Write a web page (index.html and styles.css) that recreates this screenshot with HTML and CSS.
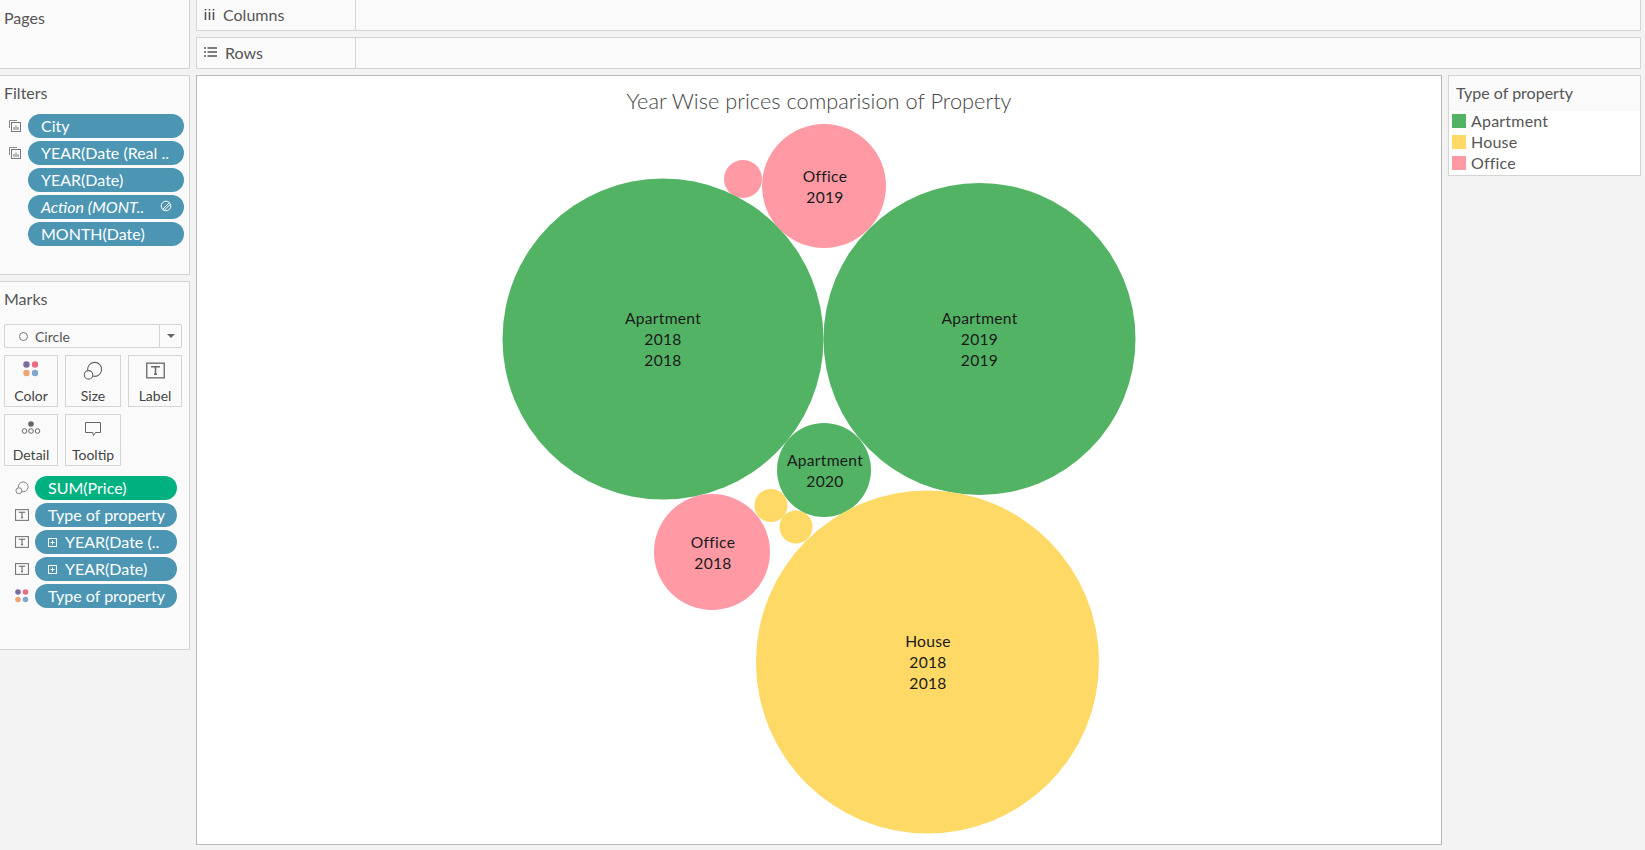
FILE: index.html
```html
<!doctype html>
<html lang="en">
<head>
    <meta charset="UTF-8">
    <title>Year Wise prices comparision of Property</title>
    <link rel="stylesheet" href="styles.css">
</head>
<body>
    <svg class="defs" width="0" height="0">
        <symbol id="i-stack" viewBox="0 0 12 12">
            <path d="M.5 8V.5H8M2.5 10V2.500H10" fill="none" stroke="#8a8a8a"/>
            <rect x="2.500" y="2.500" width="9" height="9" fill="#fafafa" stroke="#777"/>
            <path d="M5 10V7M7 10V5.500M9 10V7" stroke="#777"/>
        </symbol>
        <symbol id="i-text" viewBox="0 0 13 13">
            <rect x=".5" y="1.500" width="12" height="10" fill="none" stroke="#777"/>
            <path d="M4 4.500V4h5v.5M6.500 4v5M5.500 9h2" fill="none" stroke="#666"/>
        </symbol>
        <symbol id="i-size" viewBox="0 0 18 18">
            <path d="M4.330 8.780A6.300 6.300 0 1 1 8.650 13.520" fill="none" stroke="#666"/>
            <circle cx="5" cy="12.500" r="3.800" fill="none" stroke="#666"/>
        </symbol>
        <symbol id="i-dots" viewBox="0 0 14 14">
            <circle cx="3" cy="3" r="2.800" fill="#7b6c9c"/>
            <circle cx="10.500" cy="3" r="2.800" fill="#e96c80"/>
            <circle cx="3" cy="10.500" r="2.800" fill="#eda574"/>
            <circle cx="10.500" cy="10.500" r="2.800" fill="#7fa6cf"/>
        </symbol>
        <symbol id="i-plus" viewBox="0 0 9 9">
            <rect x=".5" y=".5" width="8" height="8" fill="none" stroke="#fff"/>
            <path d="M2.500 4.500h4M4.500 2.500v4" stroke="#fff"/>
        </symbol>
    </svg>

    <div class="top">
        <section class="card pages"><h2>Pages</h2></section>
        <div class="shelves">
            <div class="shelf">
                <div class="shelf-name">
                    <svg width="11" height="11" viewBox="0 0 11 11"><path d="M1.500 0v1.500M5.500 0v1.500M9.500 0v1.500M1.500 3v8M5.500 3v8M9.500 3v8" stroke="#555" stroke-width="1.600"/></svg>
                    Columns
                </div>
            </div>
            <div class="shelf">
                <div class="shelf-name">
                    <svg width="13" height="10" viewBox="0 0 13 10"><path d="M0 1h2M0 5h2M0 9h2M3.500 1H13M3.500 5H13M3.500 9H13" stroke="#555" stroke-width="1.500"/></svg>
                    Rows
                </div>
            </div>
        </div>
    </div>

    <div class="bottom">
        <div class="side">
            <section class="card filters">
                <h2>Filters</h2>
                <ul class="pills">
                    <li><svg class="pill-icon"><use href="#i-stack"/></svg><span class="pill">City</span></li>
                    <li><svg class="pill-icon"><use href="#i-stack"/></svg><span class="pill">YEAR(Date (Real ..</span></li>
                    <li><span class="pill">YEAR(Date)</span></li>
                    <li><span class="pill pill-action"><i>Action (MONT..</i>
                        <svg width="12" height="12" viewBox="0 0 12 12"><g fill="none" stroke="#fff"><circle cx="6" cy="6" r="4.800"/><path d="M2.600 9.400 9.400 2.600M4 10.500 10.500 4"/></g></svg>
                    </span></li>
                    <li><span class="pill">MONTH(Date)</span></li>
                </ul>
            </section>

            <section class="card marks">
                <h2>Marks</h2>
                <div class="mark-select">
                    <span class="mark-type"><span class="ring"></span>Circle</span>
                    <span class="caret"></span>
                </div>
                <div class="mark-buttons">
                    <div class="mark-btn">
                        <svg width="16" height="16"><use href="#i-dots"/></svg>
                        Color
                    </div>
                    <div class="mark-btn">
                        <svg width="20" height="20"><use href="#i-size"/></svg>
                        Size
                    </div>
                    <div class="mark-btn">
                        <svg width="19" height="19"><use href="#i-text"/></svg>
                        Label
                    </div>
                    <div class="mark-btn">
                        <svg width="20" height="16" viewBox="0 0 20 16"><g fill="none" stroke="#666"><circle cx="3.500" cy="11" r="2.300"/><circle cx="10" cy="11" r="2.300"/><circle cx="16.500" cy="11" r="2.300"/></g><circle cx="10" cy="4" r="2.800" fill="#666"/></svg>
                        Detail
                    </div>
                    <div class="mark-btn">
                        <svg width="18" height="18" viewBox="0 0 18 18"><path d="M1.500 2.500h15v10h-5l-2 3-.8-3H1.500z" fill="none" stroke="#666"/></svg>
                        Tooltip
                    </div>
                </div>
                <ul class="pills pills-marks">
                    <li><svg class="pill-icon"><use href="#i-size"/></svg><span class="pill pill-green">SUM(Price)</span></li>
                    <li><svg class="pill-icon"><use href="#i-text"/></svg><span class="pill">Type of property</span></li>
                    <li><svg class="pill-icon"><use href="#i-text"/></svg><span class="pill"><svg class="plus"><use href="#i-plus"/></svg>YEAR(Date (..</span></li>
                    <li><svg class="pill-icon"><use href="#i-text"/></svg><span class="pill"><svg class="plus"><use href="#i-plus"/></svg>YEAR(Date)</span></li>
                    <li><svg class="pill-icon"><use href="#i-dots"/></svg><span class="pill">Type of property</span></li>
                </ul>
            </section>
        </div>

        <main class="viz">
            <h1>Year Wise prices comparision of Property</h1>
            <svg class="chart" viewBox="197 76 1243 768">
                <circle class="c-pink" cx="743" cy="179" r="19"/>
                <circle class="c-green" cx="663" cy="339" r="160.500"/>
                <circle class="c-green" cx="979.500" cy="339" r="156"/>
                <circle class="c-pink" cx="824" cy="186" r="62"/>
                <circle class="c-yellow" cx="771" cy="505.500" r="16.500"/>
                <circle class="c-yellow" cx="796" cy="527" r="16.500"/>
                <circle class="c-green" cx="824" cy="470" r="47"/>
                <circle class="c-pink" cx="712" cy="552" r="58"/>
                <circle class="c-yellow" cx="927.500" cy="662" r="171.500"/>

                <text x="663" y="324">Apartment</text>
                <text x="663" y="345">2018</text>
                <text x="663" y="366">2018</text>
                <text x="979.500" y="324">Apartment</text>
                <text x="979.500" y="345">2019</text>
                <text x="979.500" y="366">2019</text>
                <text x="825" y="182">Office</text>
                <text x="825" y="203">2019</text>
                <text x="825" y="466">Apartment</text>
                <text x="825" y="487">2020</text>
                <text x="713" y="548">Office</text>
                <text x="713" y="569">2018</text>
                <text x="928" y="647">House</text>
                <text x="928" y="668">2018</text>
                <text x="928" y="689">2018</text>
            </svg>
        </main>

        <aside class="card legend">
            <h2>Type of property</h2>
            <ul class="legend-list">
                <li><span class="swatch sw-green"></span>Apartment</li>
                <li><span class="swatch sw-yellow"></span>House</li>
                <li><span class="swatch sw-pink"></span>Office</li>
            </ul>
        </aside>
    </div>
</body>
</html>
```

FILE: styles.css
```css
*{
    margin:0;
    padding:0;
    box-sizing:border-box;
}
ul{
    list-style:none;
}
html,body{
    height:100%;
    overflow:hidden;
}
body{
    background:#f3f3f3;
    font-family:"Lato","Open Sans",sans-serif;
    font-size:16px;
    color:#555;
    padding-right:4px;
}
.defs{
    position:absolute;
}
.card{
    background:#fafafa;
    border:1px solid #d4d4d4;
}
.card h2{
    font-size:16px;
    line-height:20px;
    font-weight:400;
    color:#555;
}

.top{
    display:flex;
    gap:6px;
    height:69px;
}
.pages{
    width:190px;
    border-top:0;
    border-left:0;
    padding:8px 4px;
}
.shelves{
    flex:1;
    display:flex;
    flex-direction:column;
    gap:6px;
}
.shelf{
    flex:1;
    background:#fafafa;
    border:1px solid #d4d4d4;
}
.shelf:first-child{
    border-top:0;
}
.shelf-name{
    width:159px;
    height:100%;
    border-right:1px solid #d4d4d4;
    display:flex;
    align-items:center;
    gap:8px;
    padding:0 0 2px 7px;
}

.bottom{
    display:flex;
    gap:6px;
    margin-top:6px;
    height:770px;
}
.side{
    width:190px;
    display:flex;
    flex-direction:column;
    gap:6px;
}
.filters{
    height:200px;
    border-left:0;
    padding:7px 4px;
}
.marks{
    height:369px;
    border-left:0;
    padding:7px 4px;
}
.pills{
    display:flex;
    flex-direction:column;
    gap:3px;
    margin-top:11px;
}
.pills li{
    display:flex;
    align-items:center;
}
.pill-icon{
    width:12px;
    height:12px;
    margin:0 7px 0 5px;
}
.pill{
    height:24px;
    border-radius:12px;
    background:#4c96b4;
    color:#fff;
    display:flex;
    align-items:center;
    padding:0 0 2px 13px;
    width:156px;
    white-space:nowrap;
}
.filters .pills li:nth-child(n+3) .pill{
    margin-left:24px;
}
.pill-action{
    justify-content:space-between;
    padding-right:12px;
}
.pill-green{
    background:#00b180;
}
.plus{
    width:9px;
    height:9px;
    margin:2px 8px 0 0;
}

.mark-select{
    width:178px;
    height:24px;
    margin-top:15px;
    border:1px solid #d4d4d4;
    border-radius:2px;
    display:flex;
    justify-content:space-between;
    align-items:center;
    font-size:14px;
}
.mark-type{
    display:flex;
    align-items:center;
    gap:7px;
    padding-left:14px;
}
.ring{
    width:9px;
    height:9px;
    border:1px solid #777;
    border-radius:50%;
}
.caret{
    width:22px;
    height:100%;
    border-left:1px solid #d4d4d4;
    position:relative;
}
.caret::after{
    content:"";
    position:absolute;
    left:7px;
    top:9px;
    border:4px solid transparent;
    border-top:4px solid #666;
}
.mark-buttons{
    display:grid;
    grid-template-columns:54px 56px 54px;
    gap:7px;
    margin-top:7px;
}
.mark-btn{
    height:52px;
    border:1px solid #d4d4d4;
    display:flex;
    flex-direction:column;
    align-items:center;
    justify-content:space-between;
    padding:5px 0 2px;
    font-size:14px;
    color:#444;
}
.pills-marks{
    margin-top:10px;
}
.pills-marks .pill-icon{
    width:14px;
    height:14px;
    margin:0 6px 0 11px;
}
.pills-marks .pill{
    width:142px;
}

.viz{
    width:1246px;
    height:100%;
    background:#fff;
    border:1px solid #b8b8b8;
    position:relative;
}
.viz h1{
    position:absolute;
    left:0;
    right:0;
    top:11px;
    text-align:center;
    font-size:21.8px;
    font-weight:300;
    color:#444;
}
.chart{
    width:1243px;
    height:768px;
    display:block;
}
.chart text{
    font-size:15.6px;
    letter-spacing:.3px;
    fill:#1a1a1a;
    text-anchor:middle;
}
.c-green{
    fill:#53b365;
}
.c-yellow{
    fill:#ffd966;
}
.c-pink{
    fill:#ff9aa5;
}

.legend{
    flex:1;
    height:101px;
    background:#fff;
}
.legend h2{
    background:#fafafa;
    height:35px;
    line-height:34px;
    padding-left:7px;
}
.legend-list{
    padding-left:3px;
    display:flex;
    flex-direction:column;
    gap:7px;
    padding-top:3px;
}
.legend-list li{
    display:flex;
    align-items:center;
    gap:5px;
    height:14px;
    line-height:14px;
    letter-spacing:.2px;
}
.swatch{
    width:14px;
    height:14px;
}
.sw-green{
    background:#53b365;
}
.sw-yellow{
    background:#ffd966;
}
.sw-pink{
    background:#ff9aa5;
}
```
